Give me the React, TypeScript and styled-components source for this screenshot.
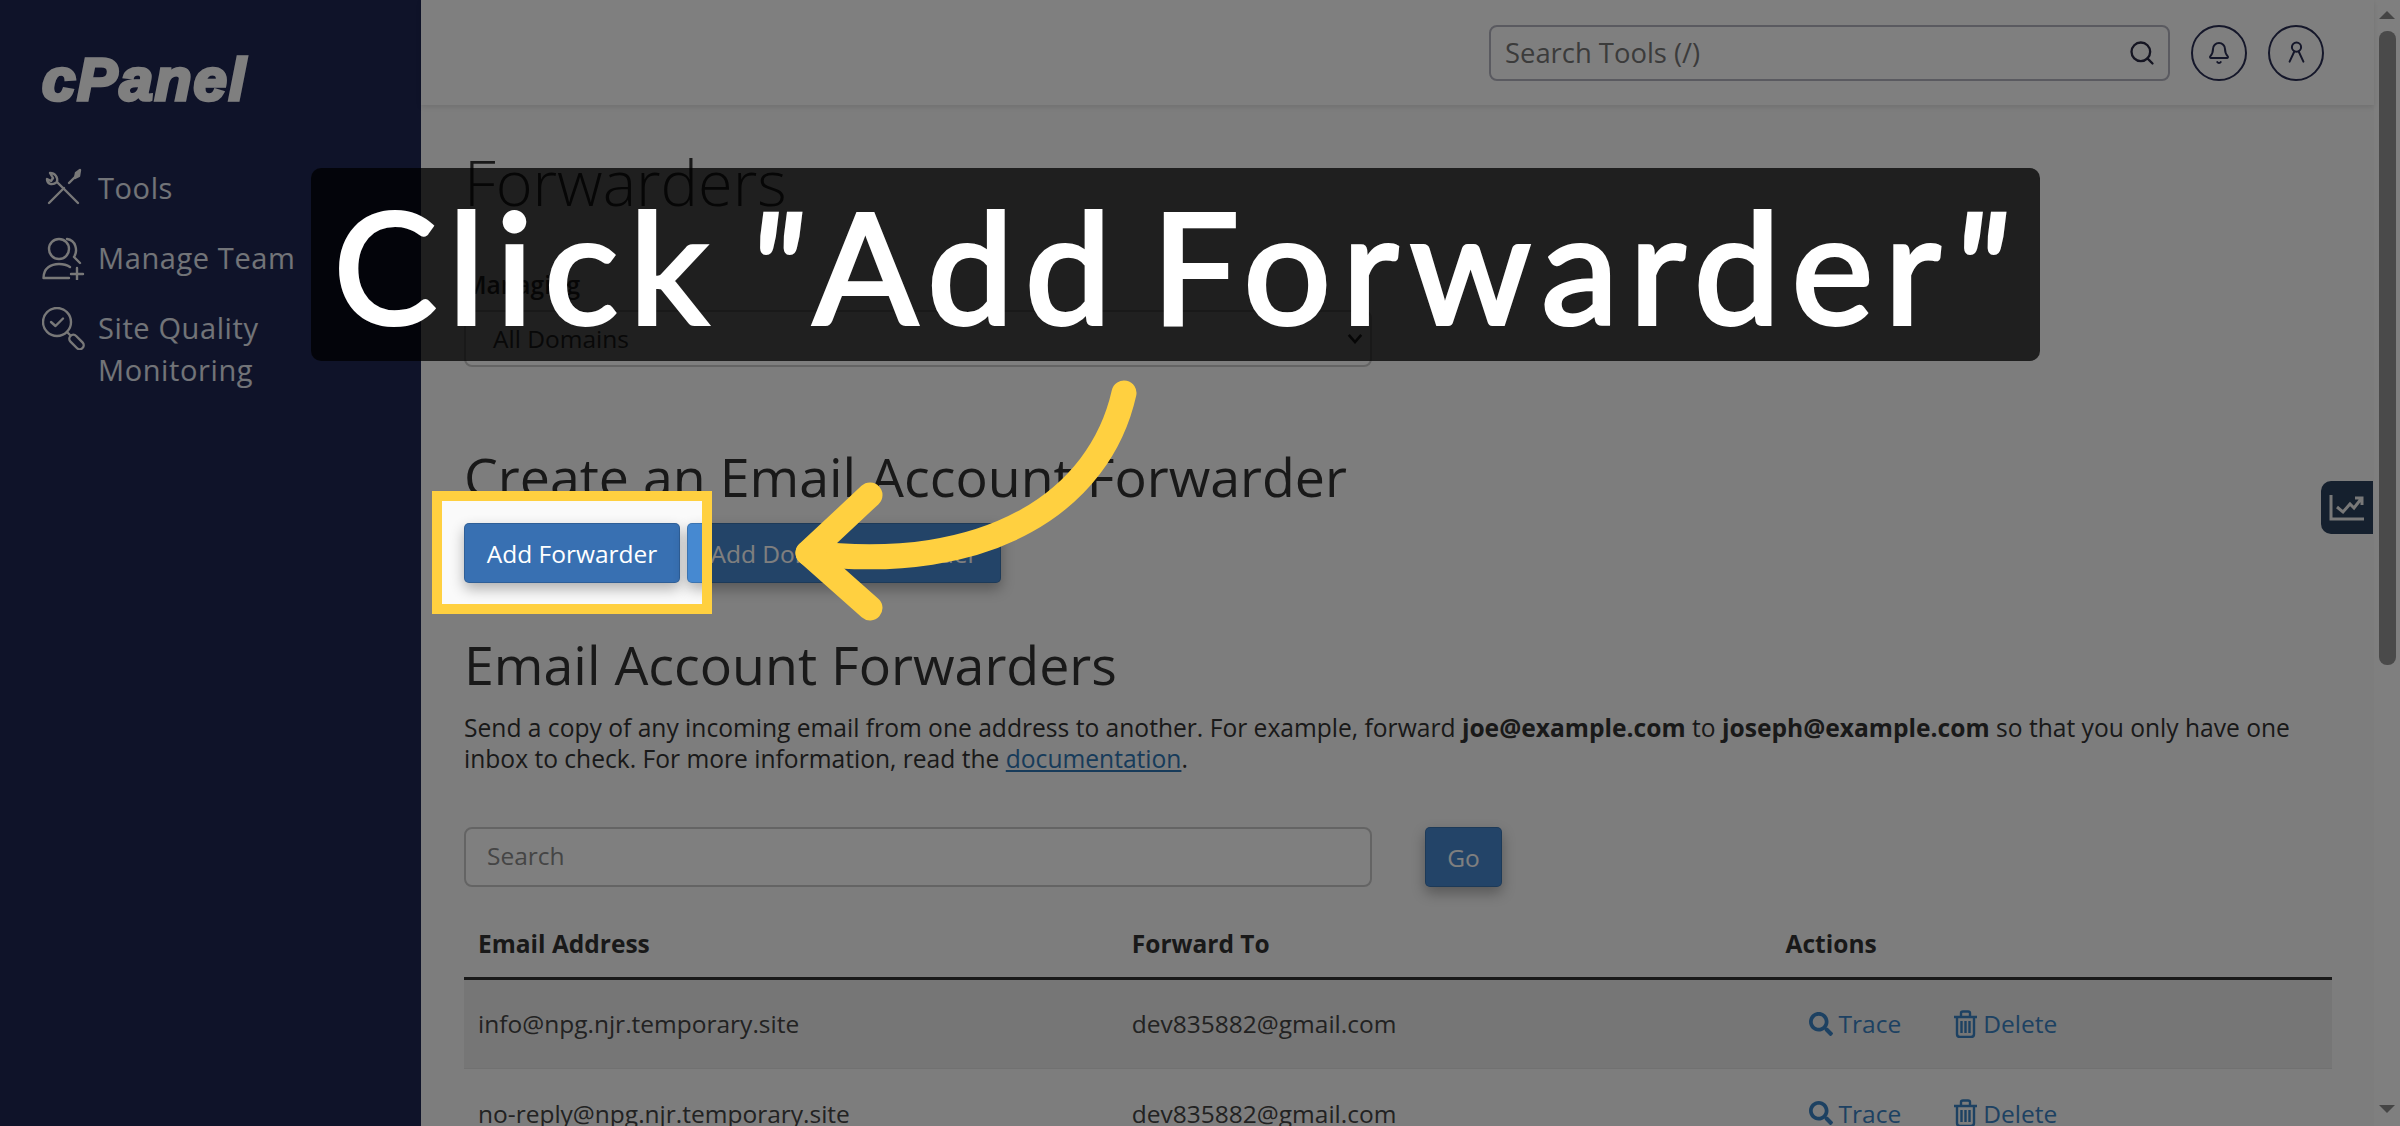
import React from "react";
import styled, { createGlobalStyle } from "styled-components";
import { Search, Bell } from "lucide-react";
import { FaSearch } from "react-icons/fa";

const Global = createGlobalStyle`
  html, body { margin: 0; padding: 0; background: #fff; overflow: hidden; }
  * { box-sizing: border-box; }
  body { font-family: "Open Sans", "Liberation Sans", sans-serif; color: #333; }
`;

const Page = styled.div`
  position: relative;
  width: 2400px;
  height: 1126px;
  overflow: hidden;
  display: flex;
`;

const Sidebar = styled.aside`
  flex: 0 0 421px;
  background: #1e2652;
  padding: 48px 20px 0 42px;
`;

const Logo = styled.div`
  font-family: "Liberation Sans", sans-serif;
  font-style: italic;
  font-weight: 700;
  font-size: 60px;
  line-height: 64px;
  letter-spacing: 2px;
  color: #fff;
  -webkit-text-stroke: 3.5px #fff;
  margin-bottom: 55px;
`;

const NavList = styled.nav`
  display: flex;
  flex-direction: column;
  gap: 27px;
`;

const NavRow = styled.div`
  display: flex;
  align-items: flex-start;
  gap: 13px;
`;

const NavIcon = styled.svg`
  flex: 0 0 43px;
  width: 43px;
  height: 43px;
  fill: none;
  stroke: #f0f0f0;
  stroke-width: 2.4;
  stroke-linecap: round;
  stroke-linejoin: round;
`;

const NavText = styled.span`
  font-size: 29px;
  line-height: 42px;
  letter-spacing: 0.6px;
  color: #e4e8f0;
`;

const Main = styled.main`
  flex: 1;
  min-width: 0;
  position: relative;
  background: #fafafa;
`;

const Header = styled.header`
  height: 105px;
  background: #fff;
  box-shadow: 0 2px 5px rgba(0, 0, 0, 0.1);
  display: flex;
  align-items: center;
  justify-content: flex-end;
  gap: 21px;
  padding: 0 50px 0 0;
`;

const ToolSearch = styled.div`
  width: 681px;
  height: 56px;
  display: flex;
  align-items: center;
  justify-content: space-between;
  border: 2px solid #b4b4c0;
  border-radius: 8px;
  background: #fff;
  padding: 0 12px 0 14px;
  font-size: 27.4px;
  color: #777;
  svg { color: #2a2a44; }
`;

const RoundButton = styled.div`
  width: 56px;
  height: 56px;
  border-radius: 50%;
  border: 2px solid #2a2f55;
  display: flex;
  align-items: center;
  justify-content: center;
  color: #2a2f55;
`;

const Content = styled.div`
  padding: 41px 42px 0 43px;
`;

const Title = styled.h1`
  margin: 0 0 49px;
  font-size: 63px;
  font-weight: 300;
  line-height: 72px;
  color: #333;
`;

const FieldLabel = styled.div`
  font-size: 24.5px;
  font-weight: 600;
  line-height: 36px;
  margin-bottom: 7px;
`;

const SelectBox = styled.div`
  width: 908px;
  height: 57px;
  border: 2px solid #c8c8c8;
  border-radius: 8px;
  background: #fff;
  display: flex;
  align-items: center;
  justify-content: space-between;
  padding: 0 7px 0 27px;
  font-size: 24.5px;
  color: #444;
  margin-bottom: 81px;
`;

const SectionTitle = styled.h2<{ $after: number }>`
  margin: 0 0 ${(p) => p.$after}px;
  font-size: 53.7px;
  font-weight: 400;
  line-height: 58px;
  color: #333;
`;

const ButtonRow = styled.div`
  display: flex;
  gap: 7px;
  margin-bottom: 53px;
`;

const ActionButton = styled.div<{ $bg: string; $width: number }>`
  width: ${(p) => p.$width}px;
  height: 60px;
  border-radius: 5px;
  background: ${(p) => p.$bg};
  border: 1px solid rgba(0, 0, 0, 0.15);
  box-shadow: 0 6px 14px rgba(0, 0, 0, 0.3);
  color: #fff;
  font-size: 24.5px;
  display: flex;
  align-items: center;
  justify-content: center;
`;

const Paragraph = styled.p`
  margin: 0 0 53px;
  font-size: 24.6px;
  line-height: 31px;
  color: #333;
  b { font-weight: 700; }
  a { color: #2f76b5; text-decoration: underline; }
`;

const SearchRow = styled.div`
  display: flex;
  gap: 53px;
  margin-bottom: 24px;
`;

const SearchField = styled.div`
  width: 908px;
  height: 60px;
  border: 2px solid #c8c8c8;
  border-radius: 8px;
  background: #fff;
  display: flex;
  align-items: center;
  padding: 0 21px 3px;
  font-size: 24.5px;
  color: #8a8a8a;
`;

const Table = styled.table`
  width: 100%;
  border-collapse: collapse;
  table-layout: fixed;
  font-size: 24.5px;
`;

const HeadCell = styled.th<{ $w: string }>`
  width: ${(p) => p.$w};
  height: 67px;
  padding: 0 14px;
  text-align: left;
  font-weight: 700;
  line-height: 36px;
  border-bottom: 3px solid #333;
  color: #333;
`;

const BodyRow = styled.tr<{ $striped?: boolean }>`
  background: ${(p) => (p.$striped ? "#ececec" : "transparent")};
`;

const Cell = styled.td`
  height: 90px;
  padding: 0 14px;
  border-bottom: 1px solid #e2e2e2;
  color: #444;
`;

const ActionGroup = styled.div`
  display: flex;
  align-items: center;
  padding-left: 23px;
  gap: 53px;
`;

const ActionLink = styled.span`
  display: inline-flex;
  align-items: center;
  gap: 6px;
  color: #3a83c4;
`;

const TrashIcon = styled.svg`
  width: 23px;
  height: 28px;
  fill: none;
  stroke: currentColor;
  stroke-width: 2.4;
`;

const ChartTab = styled.div`
  position: absolute;
  top: 481px;
  right: 1px;
  width: 52px;
  height: 53px;
  background: #2a405c;
  border-radius: 10px 0 0 10px;
  display: flex;
  align-items: center;
  justify-content: center;
`;

const ScrollTrack = styled.div`
  flex: 0 0 26px;
  background: #fff;
  display: flex;
  flex-direction: column;
  align-items: center;
  padding: 11px 0 13px;
`;

const Thumb = styled.div`
  width: 17px;
  height: 634px;
  margin-top: 12px;
  border-radius: 8px;
  background: #949494;
`;

const ScrollArrow = styled.svg<{ $end?: boolean }>`
  width: 16px;
  height: 8px;
  fill: #8a8a8a;
  margin-top: ${(p) => (p.$end ? "auto" : "0")};
`;

const Spotlight = styled.div`
  position: absolute;
  left: 442px;
  top: 501px;
  width: 260px;
  height: 103px;
  box-shadow: 0 0 0 10px #ffd040, 0 0 0 3000px rgba(0, 0, 0, 0.5);
  pointer-events: none;
`;

const Caption = styled.div`
  position: absolute;
  left: 311px;
  top: 168px;
  width: 1729px;
  height: 193px;
  border-radius: 10px;
  background: rgba(0, 0, 0, 0.75);
  display: flex;
  align-items: center;
  justify-content: center;
  font-family: "Lato", "Open Sans", sans-serif;
  font-size: 154px;
  font-weight: 400;
  letter-spacing: 11.5px;
  word-spacing: -22px;
  color: #fff;
  white-space: nowrap;
  -webkit-text-stroke: 4px #fff;
`;

const Quote = styled.span`
  font-style: italic;
`;

const Arrow = styled.svg`
  position: absolute;
  left: 780px;
  top: 370px;
  width: 370px;
  height: 270px;
  fill: none;
  stroke: #ffd040;
  stroke-width: 25;
  stroke-linecap: round;
  stroke-linejoin: round;
`;

const rows = ["info@npg.njr.temporary.site", "no-reply@npg.njr.temporary.site"];

export default function App() {
  return (
    <Page>
      <Global />
      <Sidebar>
        <Logo>cPanel</Logo>
        <NavList>
          <NavRow>
            <NavIcon viewBox="0 0 43 43">
              <path d="M7 36 L22 21 M27 16 L35 8" />
              <path d="M34 6 L38 3 L37 9 L33 11 Z" fill="#f0f0f0" />
              <path d="M36 36 L15 15 C16 10 13 6 8 6 L11 11 L9 14 L5 12 C5 17 10 19 15 15" />
            </NavIcon>
            <NavText>Tools</NavText>
          </NavRow>
          <NavRow>
            <NavIcon viewBox="0 0 43 43">
              <circle cx="17" cy="12" r="10" />
              <path d="M1.5 41 C1.5 31 9 27 17 27 C21 27 25 28 28 30 M1.5 41 H27 M35 31 V43 M29 37 H41 M25 2 C34 3 36 14 32 20 L38 26" />
            </NavIcon>
            <NavText>Manage Team</NavText>
          </NavRow>
          <NavRow>
            <NavIcon viewBox="0 0 43 43">
              <circle cx="15" cy="15" r="14" />
              <path d="M9 15 L13.5 19 L21 11.5 M25 25 L28 28" />
              <rect x="26" y="31" width="17" height="8" rx="4" transform="rotate(45 34.5 35)" />
            </NavIcon>
            <NavText>
              Site Quality
              <br />
              Monitoring
            </NavText>
          </NavRow>
        </NavList>
      </Sidebar>
      <Main>
        <Header>
          <ToolSearch>
            Search Tools (/)
            <Search size={28} strokeWidth={2} />
          </ToolSearch>
          <RoundButton>
            <Bell size={24} strokeWidth={2} />
          </RoundButton>
          <RoundButton>
            <svg width="19" height="23" viewBox="0 0 24 30" fill="none" stroke="currentColor" strokeWidth="2.6" strokeLinecap="round">
              <circle cx="12" cy="8" r="6" />
              <path d="M9 14 L3 27 M15 14 L21 27" />
            </svg>
          </RoundButton>
        </Header>
        <Content>
          <Title>Forwarders</Title>
          <FieldLabel>Managing</FieldLabel>
          <SelectBox>
            All Domains
            <svg width="16" height="11" viewBox="0 0 18 12" fill="none" stroke="#333" strokeWidth="3">
              <path d="M2 2 L9 10 L16 2" />
            </svg>
          </SelectBox>
          <SectionTitle $after={17}>Create an Email Account Forwarder</SectionTitle>
          <ButtonRow>
            <ActionButton $bg="#3870b2" $width={216}>Add Forwarder</ActionButton>
            <ActionButton $bg="#4689d1" $width={314}>Add Domain Forwarder</ActionButton>
          </ButtonRow>
          <SectionTitle $after={18}>Email Account Forwarders</SectionTitle>
          <Paragraph>
            Send a copy of any incoming email from one address to another. For example, forward <b>joe@example.com</b> to{" "}
            <b>joseph@example.com</b> so that you only have one inbox to check. For more information, read the{" "}
            <a>documentation</a>.
          </Paragraph>
          <SearchRow>
            <SearchField>Search</SearchField>
            <ActionButton $bg="#4689d1" $width={77}>Go</ActionButton>
          </SearchRow>
          <Table>
            <thead>
              <tr>
                <HeadCell $w="35%">Email Address</HeadCell>
                <HeadCell $w="35%">Forward To</HeadCell>
                <HeadCell $w="30%">Actions</HeadCell>
              </tr>
            </thead>
            <tbody>
              {rows.map((r, i) => (
                <BodyRow key={r} $striped={i === 0}>
                  <Cell>{r}</Cell>
                  <Cell>dev835882@gmail.com</Cell>
                  <Cell>
                    <ActionGroup>
                      <ActionLink>
                        <FaSearch size={24} />
                        Trace
                      </ActionLink>
                      <ActionLink>
                        <TrashIcon viewBox="0 0 23 28">
                          <path d="M0 7 H23 M7 7 V3 Q7 1.5 9 1.5 H14 Q16 1.5 16 3 V7" />
                          <path d="M3 7 V24 Q3 27 6 27 H17 Q20 27 20 24 V7" />
                          <path d="M7.5 11 V23 M11.5 11 V23 M15.5 11 V23" />
                        </TrashIcon>
                        Delete
                      </ActionLink>
                    </ActionGroup>
                  </Cell>
                </BodyRow>
              ))}
            </tbody>
          </Table>
        </Content>
        <ChartTab>
          <svg width="36" height="27" viewBox="0 0 36 27" fill="none" stroke="#f0f0f0" strokeWidth="3">
            <path d="M2 1 V25 H35" />
            <path d="M8 13 L14 18 L21 10 L25 14 L32 5 M26 4 H33 V11" />
          </svg>
        </ChartTab>
      </Main>
      <ScrollTrack>
        <ScrollArrow viewBox="0 0 16 8">
          <path d="M8 0 L16 8 H0 Z" />
        </ScrollArrow>
        <Thumb />
        <ScrollArrow $end viewBox="0 0 16 8">
          <path d="M0 0 H16 L8 8 Z" />
        </ScrollArrow>
      </ScrollTrack>
      <Spotlight />
      <Caption>
        <span>
          Click <Quote>"</Quote>Add Forwarder<Quote>"</Quote>
        </span>
      </Caption>
      <Arrow viewBox="780 370 370 270">
        <path d="M1124 393 C1100 500 990 575 808 553" />
        <path d="M870 495 L808 553 L870 608" />
      </Arrow>
    </Page>
  );
}
